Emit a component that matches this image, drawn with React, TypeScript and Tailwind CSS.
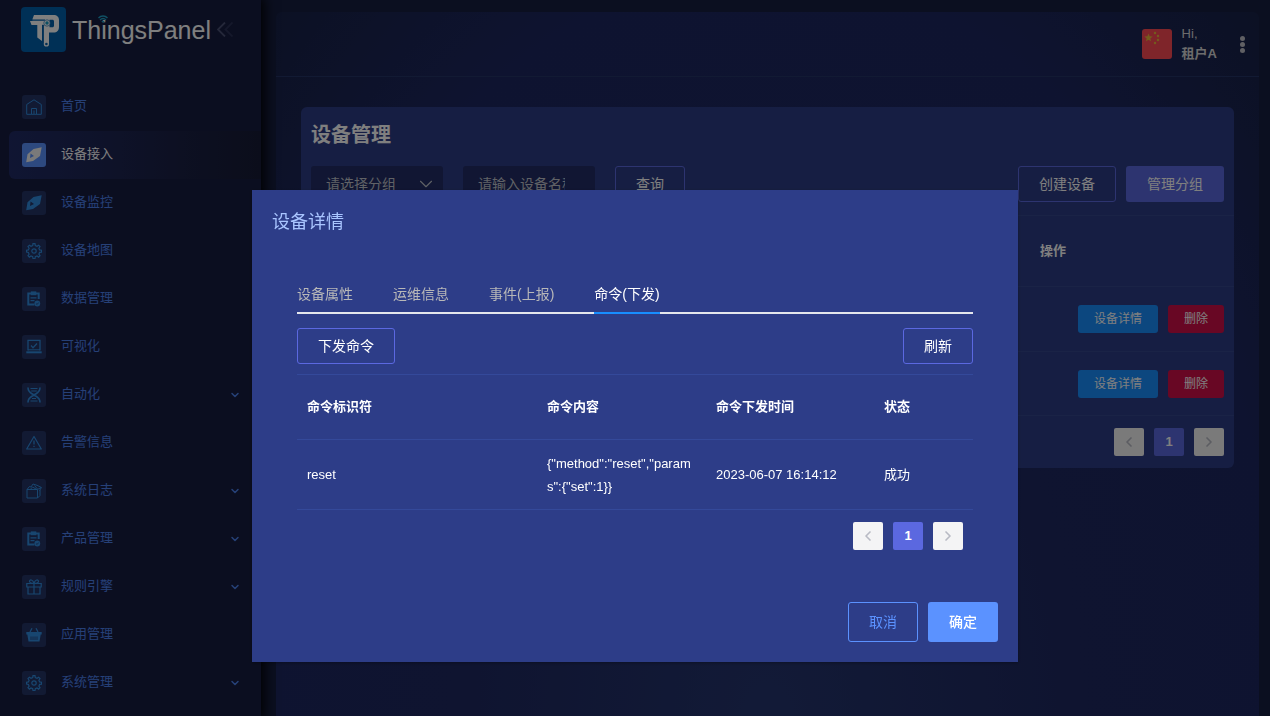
import React from "react";
import { ChevronDown, ChevronLeft, ChevronRight } from "lucide-react";

type IconName =
  | "home"
  | "compass"
  | "gear"
  | "clipboard"
  | "laptop"
  | "hourglass"
  | "alert"
  | "box"
  | "gift"
  | "basket";

const menu: { label: string; icon: IconName; active?: boolean; expandable?: boolean }[] = [
  { label: "首页", icon: "home" },
  { label: "设备接入", icon: "compass", active: true },
  { label: "设备监控", icon: "compass" },
  { label: "设备地图", icon: "gear" },
  { label: "数据管理", icon: "clipboard" },
  { label: "可视化", icon: "laptop" },
  { label: "自动化", icon: "hourglass", expandable: true },
  { label: "告警信息", icon: "alert" },
  { label: "系统日志", icon: "box", expandable: true },
  { label: "产品管理", icon: "clipboard", expandable: true },
  { label: "规则引擎", icon: "gift", expandable: true },
  { label: "应用管理", icon: "basket" },
  { label: "系统管理", icon: "gear", expandable: true },
];

const glyphs: Record<IconName, React.ReactNode> = {
  home: (
    <>
      <path d="M.7 15.300V5.500L8 .800l7.300 4.700v9.800z" />
      <path d="M5.500 15V9.500h5V15M8 11.500V15" />
    </>
  ),
  compass: (
    <path
      d="M15.700.2 14 8.900 7 13.900.2 15.300 1.500 7.300 7.500 2zM4.600 6.500 4 10.900 8 9z"
      fill="currentColor"
      fillRule="evenodd"
      stroke="none"
    />
  ),
  gear: (
    <>
      <path
        d="M6.7 2.600 7 .7h2l.3 1.900 1.700.7 1.600-1.100 1.400 1.400-1.100 1.600.7 1.700 1.900.3v1.900l-1.900.3-.7 1.700 1.100 1.600-1.400 1.400-1.600-1.100-1.700.7-.3 1.900H7l-.3-1.900-1.700-.7-1.600 1.100L2 12.700l1.100-1.600-.7-1.700L.6 9V7.200l1.800-.3.7-1.700L2 3.600 3.400 2.200 5 3.300z"
        strokeWidth="1.200"
      />
      <circle cx="8" cy="8" r="2.200" strokeWidth="1.200" />
    </>
  ),
  clipboard: (
    <>
      <path d="M8.500 13.500H2.300V2.500h10.400V8" strokeWidth="2" />
      <path d="M4.800.4h5.500v3.800H4.800z" fill="currentColor" stroke="none" />
      <path d="M4.500 6.800h6M4.500 9.700h4" strokeWidth="1.300" />
      <circle cx="11.300" cy="12.500" r="2.900" fill="currentColor" stroke="none" />
      <path d="m10.100 12.600 1 .9 1.500-1.900" stroke="#263870" strokeWidth=".8" />
    </>
  ),
  laptop: (
    <>
      <path d="M2 11.500V1.300h12v10.200M5 6.500l2 2.200L11 4.500" strokeWidth="1.300" />
      <path d="M.300 13.300h15.400" strokeWidth="2" />
      <path d="M2 10.800h12" />
    </>
  ),
  hourglass: (
    <>
      <path
        d="M2 .5c0 5 3 5.500 6 7.500 3 2 6 2.500 6 7.500M14 .5c0 5-3 5.500-6 7.500-3 2-6 2.500-6 7.500"
        strokeWidth="1.600"
      />
      <path d="M4.500 1.500h7M5.200 4h5.600M6 11.500h4M4.500 14h7" strokeWidth="1.200" />
    </>
  ),
  alert: (
    <>
      <path d="M8 1.500 15.300 14H.7z" strokeLinejoin="round" strokeWidth="1.200" />
      <path d="M8 5.500v4M8 10.700v1.300" strokeWidth="1.300" />
    </>
  ),
  box: (
    <>
      <path d="M1 6.500h10.500v8.500H1zM11.500 6.500 15 4.500M11.500 15l2.500-2.500V7" />
      <path d="M1 6.500 3.500 3.500 5 4l2-3 4 1.300 4.500 2.200-2 3M4.500 6.300 6.500 4 10.500 6.300M8.500 2.500l3 3.500" />
    </>
  ),
  gift: (
    <>
      <path d="M.8 4.500h14.400V8H.8zM2 8v7h12V8M8 4.500V15" strokeWidth="1.200" />
      <path
        d="M8 4.300C6 4.300 3.500 3.800 3.500 2.200 3.500.3 7 .3 8 4.300 9 .3 12.500.3 12.500 2.200c0 1.600-2.500 2.100-4.500 2.100z"
        strokeWidth="1.200"
      />
    </>
  ),
  basket: (
    <>
      <path d="M.3 5h15.400v2.500h-1L13.500 14.500h-11L1.300 7.500h-1z" fill="currentColor" stroke="none" />
      <path d="M4 5 6 1.200M12 5l-2-3.800" strokeWidth="1.300" />
      <path d="M5 9.500v3.500M7 9.500v3.500M9 9.500v3.500M11 9.500v3.500" stroke="#263870" strokeWidth=".8" />
    </>
  ),
};

function MenuIcon({ name, active }: { name: IconName; active?: boolean }) {
  return (
    <span
      className={
        active
          ? "flex size-6 items-center justify-center rounded-[3px] bg-[#5b92ff] text-[#f4f4f4]"
          : "flex size-6 items-center justify-center rounded-[3px] bg-[#243466] text-[#308ce0]"
      }
    >
      <svg viewBox="0 0 16 16" className="size-4" fill="none" stroke="currentColor" strokeWidth="1">
        {glyphs[name]}
      </svg>
    </span>
  );
}

function Logo() {
  return (
    <svg viewBox="0 0 45 45" className="size-[45px]" aria-hidden="true">
      <rect width="45" height="45" rx="4" fill="#0060ac" />
      <path d="M13 8h19.500c3.500 0 5.500 2 5.500 5v6.500c0 4-2 6-5.500 6H28V37a2.600 2.600 0 0 1-5.200 0V18H11L11.500 12z" fill="#fff" />
      <path d="M9 14h13v4h-1v16l-4.700-3.500V18H10.500z" fill="#fff" />
      <path d="M28.500 12.800h3c.8 0 1.500.6 1.500 1.500v4.500c0 .9-.7 1.500-1.500 1.500h-3z" fill="#0060ac" />
      <path d="M10 13.200h14M21.900 17.800V36" stroke="#0060ac" strokeWidth="1.200" fill="none" />
      <circle cx="26" cy="16" r="3.200" fill="#fff" stroke="#0060ac" strokeWidth=".6" />
      <circle cx="26" cy="16" r="1.700" fill="#1b9fc8" />
      <circle cx="25.400" cy="37" r="1.300" fill="#0060ac" />
    </svg>
  );
}

function Sidebar() {
  return (
    <aside className="relative z-10 min-h-screen w-[261px] shrink-0 bg-[#171d40] shadow-[0_0_12px_3px_#000]">
      <div className="flex h-[83px] items-start pt-[7px] pl-[21px]">
        <Logo />
        <div className="relative ml-1.5 flex h-[47px] items-center text-[25px] text-white">
          ThingsPanel
          <svg viewBox="0 0 10 9" className="absolute top-2 left-[26px] h-[9px] w-2.5" fill="none" stroke="#20a0c8" strokeWidth="1.400" aria-hidden="true">
            <path d="M.5 3C3 .3 7 .3 9.500 3M2 5c1.800-1.700 4.200-1.700 6 0M3.800 7c.8-.7 1.600-.7 2.400 0" />
          </svg>
        </div>
        <button type="button" aria-label="收起菜单" className="ml-1.5 flex h-[45px] items-center">
          <svg viewBox="0 0 16 15" className="h-[15px] w-4" fill="none" strokeWidth="1.800">
            <path d="M8 .5 1 7.500l7 7" stroke="#4a5074" />
            <path d="M15.500.5l-7 7 7 7" stroke="#2b3156" />
          </svg>
        </button>
      </div>
      <nav>
        <ul>
          {menu.map((item) => (
            <li key={item.label} className="pl-[9px]">
              <a
                href="#"
                className={
                  item.active
                    ? "flex h-12 items-center rounded-l-md bg-linear-to-r from-[#202b66] to-[#171b36] pr-5 pl-[13px] text-[13px] text-white"
                    : "flex h-12 items-center pr-5 pl-[13px] text-[13px] text-[#4c80ee]"
                }
              >
                <MenuIcon name={item.icon} active={item.active} />
                <span className="ml-[15px] flex-1 pb-0.5">{item.label}</span>
                {item.expandable && <ChevronDown size={12} strokeWidth={3} />}
              </a>
            </li>
          ))}
        </ul>
      </nav>
    </aside>
  );
}

function Flag() {
  return (
    <svg viewBox="0 0 30 30" className="size-[30px]" aria-hidden="true">
      <rect width="30" height="30" rx="3" fill="#ff4b55" />
      <path d="m6.500 4.500 1.100 2.800 3 .2-2.300 1.900.8 2.900-2.600-1.600-2.500 1.600.7-2.900L2.400 7.500l3-.2z" fill="#e8b83a" />
      <g fill="#e8b83a">
        <circle cx="13" cy="4" r="1.200" />
        <circle cx="16" cy="7" r="1.200" />
        <circle cx="16" cy="11" r="1.200" />
        <circle cx="13" cy="14" r="1.200" />
      </g>
    </svg>
  );
}

function TopBar() {
  return (
    <header className="flex h-[65px] items-center justify-end border-b border-[#253466] pr-3.5">
      <Flag />
      <div className="ml-2.5 text-[13px] leading-5 text-[#d8d8d8]">
        <div>Hi,</div>
        <div className="font-bold">租户A</div>
      </div>
      <button type="button" aria-label="更多" className="ml-[23px] flex flex-col gap-px">
        <span className="size-[5px] rounded-full bg-[#c0c0c8]" />
        <span className="size-[5px] rounded-full bg-[#c0c0c8]" />
        <span className="size-[5px] rounded-full bg-[#c0c0c8]" />
      </button>
    </header>
  );
}

function Pagination({ label }: { label: string }) {
  return (
    <nav aria-label={label} className="flex justify-end gap-2.5 px-2.5 py-3 text-[13px] font-bold">
      <button type="button" aria-label="上一页" className="flex h-7 w-[30px] items-center justify-center rounded-xs bg-[#f4f4f5] text-[#b8bac4]">
        <ChevronLeft size={16} strokeWidth={2.5} />
      </button>
      <button type="button" className="h-7 w-[30px] rounded-xs bg-[#5b68e0] text-white">
        1
      </button>
      <button type="button" aria-label="下一页" className="flex h-7 w-[30px] items-center justify-center rounded-xs bg-[#f4f4f5] text-[#b8bac4]">
        <ChevronRight size={16} strokeWidth={2.5} />
      </button>
    </nav>
  );
}

const outlineButton = "h-9 rounded-[3px] border border-[#5b68e0] px-5 text-sm text-white";

function DevicePanel() {
  return (
    <section className="mx-[25px] mt-[30px] rounded-md bg-[#2d3d86]">
      <h1 className="px-2.5 pt-3 text-xl leading-8 font-bold text-white">设备管理</h1>
      <div className="flex items-center px-2.5 pt-[15px] pb-[13px]">
        <div className="relative w-[132px]">
          <select aria-label="分组" className="h-9 w-full appearance-none rounded-[3px] bg-[#222c66] pl-[15px] text-sm text-[#c0c4cc]">
            <option>请选择分组</option>
          </select>
          <ChevronDown size={22} strokeWidth={1.2} className="pointer-events-none absolute top-[7px] right-1.5 text-[#c0c4cc]" />
        </div>
        <input
          aria-label="设备名称"
          placeholder="请输入设备名称"
          className="ml-5 h-9 w-[132px] rounded-[3px] bg-[#222c66] pr-[30px] pl-[15px] text-sm text-white placeholder:text-[#c0c4cc]"
        />
        <button type="button" className={`ml-5 ${outlineButton}`}>
          查询
        </button>
        <div className="ml-auto flex gap-2.5">
          <button type="button" className={outlineButton}>
            创建设备
          </button>
          <button type="button" className="h-9 rounded-[3px] bg-[#5b68e0] px-[21px] text-sm text-white">
            管理分组
          </button>
        </div>
      </div>
      <table className="w-full text-[13px] text-white">
        <thead>
          <tr className="h-[71px] border-t border-[#34468c]">
            <td />
            <th scope="col" className="w-[204px] px-2.5 text-left font-bold">
              操作
            </th>
          </tr>
        </thead>
        <tbody>
          {[1, 2].map((row) => (
            <tr key={row} className="h-[65px] border-y border-[#34468c] last:h-16">
              <td />
              <td className="px-2.5">
                <div className="flex justify-end gap-2.5 text-xs">
                  <button type="button" className="h-7 rounded-[3px] bg-[#188eff] px-4">
                    设备详情
                  </button>
                  <button type="button" className="h-7 rounded-[3px] bg-[#d00e48] px-4">
                    删除
                  </button>
                </div>
              </td>
            </tr>
          ))}
        </tbody>
      </table>
      <Pagination label="设备分页" />
    </section>
  );
}

const tabs = ["设备属性", "运维信息", "事件(上报)", "命令(下发)"];

function DetailDialog() {
  return (
    <div className="fixed inset-0 z-20 flex items-start justify-center overflow-auto bg-black/50 pt-[190px]">
      <div role="dialog" aria-modal="true" aria-labelledby="dialog-title" className="w-[766px] max-w-full bg-[#2d3d88] text-[13px] text-white shadow-[0_1px_3px_rgba(0,0,0,0.3)]">
        <h2 id="dialog-title" className="px-5 pt-5 text-lg leading-6 text-[#a9c5ff]">
          设备详情
        </h2>
        <div className="px-[45px] pt-10">
          <div role="tablist" className="flex gap-10 border-b-2 border-[#e4e7ed] text-sm">
            {tabs.map((tab, i) => (
              <button
                key={tab}
                type="button"
                role="tab"
                aria-selected={i === 3}
                className={
                  i === 3
                    ? "-mb-0.5 h-10 border-b-2 border-[#188eff] pt-0.5 text-white"
                    : "-mb-0.5 h-10 border-b-2 border-transparent pt-0.5 text-[#b8b8b8]"
                }
              >
                {tab}
              </button>
            ))}
          </div>
          <div className="flex justify-between pt-3.5 pb-2.5">
            <button type="button" className={outlineButton}>
              下发命令
            </button>
            <button type="button" className={outlineButton}>
              刷新
            </button>
          </div>
          <table className="w-full table-fixed text-left">
            <thead>
              <tr className="h-[65px] border-y border-[#34499a]">
                <th scope="col" className="w-[240px] px-2.5">命令标识符</th>
                <th scope="col" className="w-[169px] px-2.5">命令内容</th>
                <th scope="col" className="w-[168px] px-2.5">命令下发时间</th>
                <th scope="col" className="px-2.5">状态</th>
              </tr>
            </thead>
            <tbody>
              <tr className="h-[70px] border-b border-[#34499a] leading-[23px]">
                <td className="px-2.5">reset</td>
                <td className="px-2.5 break-all">{'{"method":"reset","params":{"set":1}}'}</td>
                <td className="px-2.5">2023-06-07 16:14:12</td>
                <td className="px-2.5">成功</td>
              </tr>
            </tbody>
          </table>
          <Pagination label="命令分页" />
        </div>
        <div className="flex justify-end gap-2.5 px-5 pt-10 pb-5 text-sm">
          <button type="button" className="h-10 rounded-[3px] border border-[#5b92ff] px-5 text-[#5b92ff]">
            取消
          </button>
          <button type="button" className="h-10 rounded-[3px] bg-[#5b92ff] px-[21px] font-medium text-white">
            确定
          </button>
        </div>
      </div>
    </div>
  );
}

export default function App() {
  return (
    <div className="flex min-h-screen bg-[#161e40] font-['Liberation_Sans','Noto_Sans_CJK_SC',sans-serif]">
      <Sidebar />
      <main className="mt-3 mr-[11px] ml-[15px] min-w-0 flex-1 rounded-t-md bg-[radial-gradient(ellipse_at_50%_100%,#25356f_0%,#1e2860_45%,#1d2760_75%,#182248_100%)]">
        <TopBar />
        <DevicePanel />
      </main>
      <DetailDialog />
    </div>
  );
}
